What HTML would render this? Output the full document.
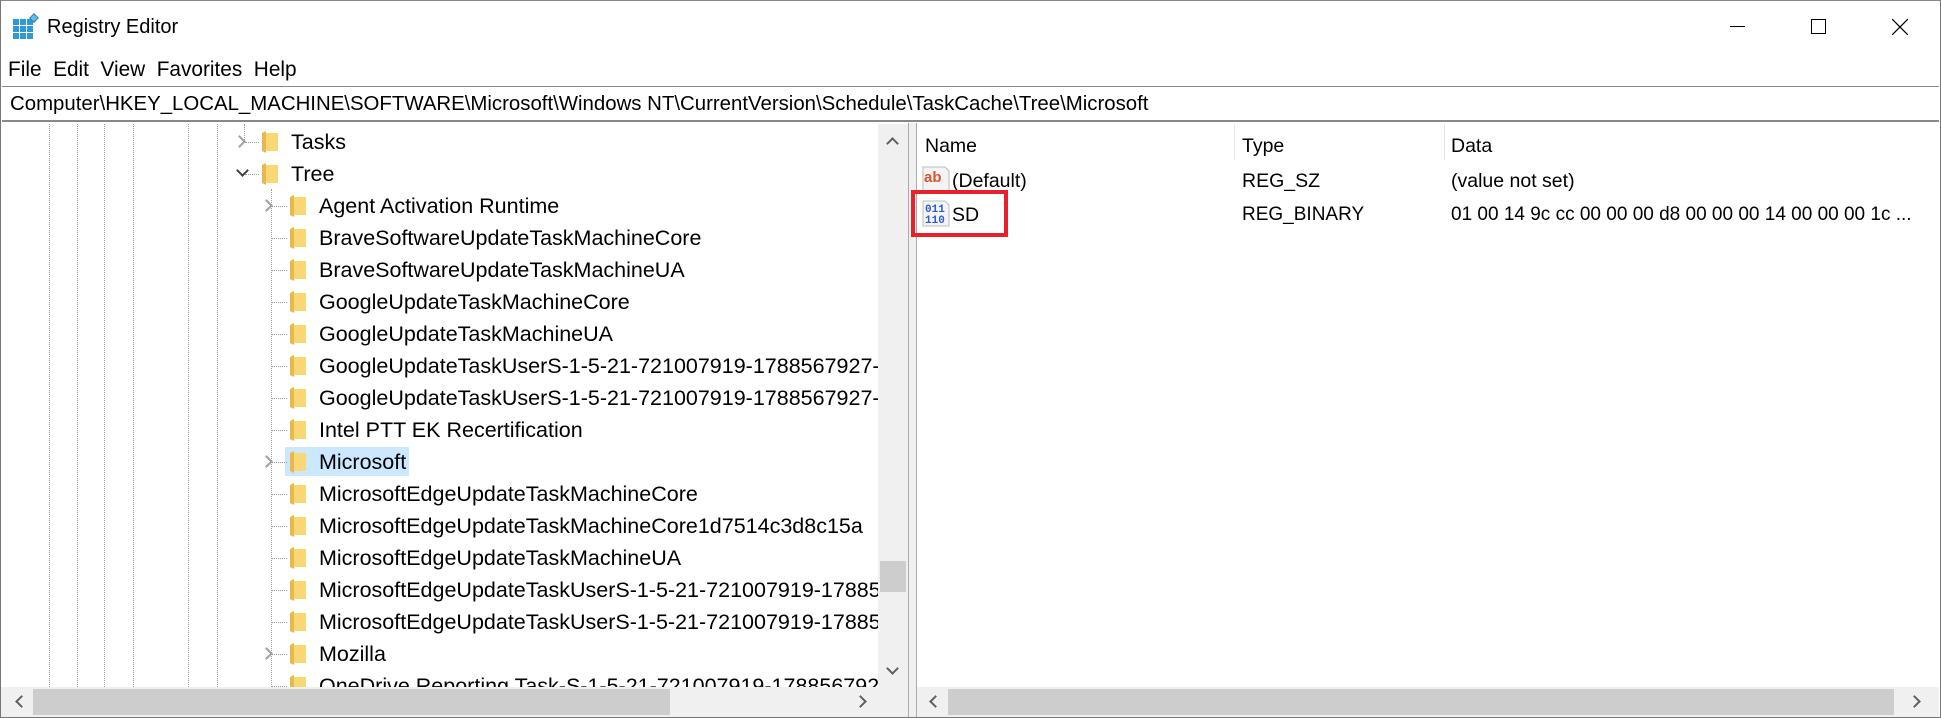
<!DOCTYPE html>
<html><head><meta charset="utf-8"><style>
*{margin:0;padding:0;box-sizing:border-box}
body{width:1941px;height:718px;background:#fff;font-family:"Liberation Sans",sans-serif;color:#000;position:relative;overflow:hidden;font-size:19px}
.a{position:absolute}
.frame{left:0;top:0;width:1941px;height:718px;border:1px solid #777;border-top-color:#888}
.dot{position:absolute;width:0;border-left:1px dotted #999}
.hd{position:absolute;height:0;border-top:1px dotted #999}
.fold{position:absolute;width:16px;height:22px}
.t{position:absolute;white-space:nowrap;line-height:32px;height:32px}
.chev{position:absolute;width:9px;height:9px;border-right:2px solid #a0a0a0;border-bottom:2px solid #a0a0a0}
</style></head><body>
<div class="a frame"></div>
<svg class="a" style="left:13px;top:13px" width="28" height="28" viewBox="0 0 28 28">
<g fill="#2b9ad6"><rect x="0" y="6" width="6" height="6"/><rect x="7" y="6" width="6" height="6"/><rect x="14" y="6" width="6" height="6"/><rect x="0" y="13" width="6" height="6"/><rect x="7" y="13" width="6" height="6"/><rect x="14" y="13" width="6" height="6"/><rect x="0" y="20" width="6" height="6"/><rect x="7" y="20" width="6" height="6"/><rect x="14" y="20" width="6" height="6"/></g>
<rect x="18" y="2" width="6" height="6" fill="#6bbbe8" stroke="#2b7fc0" transform="rotate(45 21 5)"/></svg>
<div class="a" style="left:47px;top:16px;font-size:20px">Registry Editor</div>
<div class="a" style="left:1730px;top:26px;width:15px;border-top:1px solid #000"></div>
<div class="a" style="left:1811px;top:19px;width:15px;height:15px;border:1px solid #000"></div>
<svg class="a" style="left:1892px;top:19px" width="16" height="16"><path d="M0 0L16 16M16 0L0 16" stroke="#000" stroke-width="1.2"/></svg>
<div class="a" style="left:8px;top:58px;font-size:20.8px">File&nbsp;&nbsp;Edit&nbsp;&nbsp;View&nbsp;&nbsp;Favorites&nbsp;&nbsp;Help</div>
<div class="a" style="left:2px;top:86px;width:1937px;height:36px;border-top:1px solid #888;border-bottom:2px solid #888"></div>
<div class="a" style="left:10px;top:93px;font-size:20.4px">Computer\HKEY_LOCAL_MACHINE\SOFTWARE\Microsoft\Windows NT\CurrentVersion\Schedule\TaskCache\Tree\Microsoft</div>
<div class="dot" style="left:49px;top:124px;height:563px"></div>
<div class="dot" style="left:77px;top:124px;height:563px"></div>
<div class="dot" style="left:104px;top:124px;height:563px"></div>
<div class="dot" style="left:133px;top:124px;height:563px"></div>
<div class="dot" style="left:188px;top:124px;height:563px"></div>
<div class="dot" style="left:217px;top:124px;height:563px"></div>
<div class="dot" style="left:244px;top:124px;height:16px"></div>
<div class="dot" style="left:271px;top:189px;height:498px"></div>
<div class="a" style="left:285px;top:447px;width:124px;height:29px;background:#cce8ff"></div>
<div id="tree"></div>
<div class="a" style="left:878px;top:124px;width:30px;height:563px;background:#f0f0f0"></div>
<div class="chev" style="left:888px;top:139px;transform:rotate(-135deg);border-color:#606060"></div>
<div class="a" style="left:880px;top:561px;width:26px;height:31px;background:#cdcdcd"></div>
<div class="chev" style="left:888px;top:664px;transform:rotate(45deg);border-color:#606060"></div>
<div class="a" style="left:1px;top:687px;width:909px;height:30px;background:#f0f0f0"></div>
<div class="a" style="left:33px;top:689px;width:637px;height:26px;background:#cdcdcd"></div>
<div class="chev" style="left:17px;top:697px;transform:rotate(135deg);border-color:#606060"></div>
<div class="chev" style="left:856px;top:697px;transform:rotate(-45deg);border-color:#606060"></div>
<div class="a" style="left:908px;top:123px;width:9px;height:594px;background:#f0f0f0;border-left:1px solid #aaa;border-right:1px solid #aaa"></div>
<div class="a" style="left:925px;top:133px;line-height:26px;font-size:19.5px">Name</div>
<div class="a" style="left:1242px;top:133px;line-height:26px;font-size:19.5px">Type</div>
<div class="a" style="left:1451px;top:133px;line-height:26px;font-size:19.5px">Data</div>
<div class="a" style="left:1234px;top:124px;height:36px;border-left:1px solid #e5e5e5"></div>
<div class="a" style="left:1444px;top:124px;height:36px;border-left:1px solid #e5e5e5"></div>
<svg class="a" style="left:921px;top:166px" width="30" height="28" viewBox="0 0 30 28"><path d="M2 1h22l4 4v21H2z" fill="#f4f4f4" stroke="#bbb"/><text x="3" y="16" font-family="Liberation Sans" font-weight="bold" font-size="15" fill="#d9532c">ab</text></svg>
<div class="a" style="left:952px;top:168px;line-height:26px;font-size:19.5px">(Default)</div>
<div class="a" style="left:1242px;top:168px;line-height:26px;font-size:19.5px">REG_SZ</div>
<div class="a" style="left:1451px;top:168px;line-height:26px;font-size:19.5px">(value not set)</div>
<svg class="a" style="left:921px;top:200px" width="30" height="28" viewBox="0 0 30 28"><path d="M2 1h22l4 4v21H2z" fill="#f4f4f4" stroke="#bbb"/><text x="4" y="12" font-family="Liberation Mono" font-weight="bold" font-size="11" fill="#2c5ad8">011</text><text x="4" y="23" font-family="Liberation Mono" font-weight="bold" font-size="11" fill="#2c5ad8">110</text></svg>
<div class="a" style="left:952px;top:202px;line-height:26px;font-size:19.5px">SD</div>
<div class="a" style="left:1242px;top:202px;line-height:26px;font-size:19px">REG_BINARY</div>
<div class="a" style="left:1451px;top:202px;line-height:26px;font-size:19px">01 00 14 9c cc 00 00 00 d8 00 00 00 14 00 00 00 1c ...</div>
<div class="a" style="left:911px;top:190px;width:97px;height:47px;border:4px solid #e8202a"></div>
<div class="a" style="left:917px;top:687px;width:1022px;height:30px;background:#f0f0f0"></div>
<div class="a" style="left:948px;top:689px;width:946px;height:26px;background:#cdcdcd"></div>
<div class="chev" style="left:931px;top:697px;transform:rotate(135deg);border-color:#606060"></div>
<div class="chev" style="left:1910px;top:697px;transform:rotate(-45deg);border-color:#606060"></div>
<script>
var items=[["Tasks",0,"r"],["Tree",0,"d"],["Agent Activation Runtime",1,"r"],["BraveSoftwareUpdateTaskMachineCore",1,""],["BraveSoftwareUpdateTaskMachineUA",1,""],["GoogleUpdateTaskMachineCore",1,""],["GoogleUpdateTaskMachineUA",1,""],["GoogleUpdateTaskUserS-1-5-21-721007919-1788567927-259",1,""],["GoogleUpdateTaskUserS-1-5-21-721007919-1788567927-259",1,""],["Intel PTT EK Recertification",1,""],["Microsoft",1,"r"],["MicrosoftEdgeUpdateTaskMachineCore",1,""],["MicrosoftEdgeUpdateTaskMachineCore1d7514c3d8c15a",1,""],["MicrosoftEdgeUpdateTaskMachineUA",1,""],["MicrosoftEdgeUpdateTaskUserS-1-5-21-721007919-17885679",1,""],["MicrosoftEdgeUpdateTaskUserS-1-5-21-721007919-17885679",1,""],["Mozilla",1,"r"],["OneDrive Reporting Task-S-1-5-21-721007919-1788567927-2",1,""]];
var h="";
items.forEach(function(it,i){var cy=142+i*32,lv=it[1],cx=lv?271:244,fx=lv?290:262,tx=lv?319:291;
h+='<div class="hd" style="left:'+(cx+1)+'px;top:'+cy+'px;width:'+(fx-cx-4)+'px"></div>';
if(it[2]=="r")h+='<div class="chev" style="left:'+(cx-9)+'px;top:'+(cy-5)+'px;transform:rotate(-45deg)"></div>';
if(it[2]=="d")h+='<div class="chev" style="left:'+(cx-6)+'px;top:'+(cy-8)+'px;transform:rotate(45deg);border-color:#404040"></div>';
h+='<svg class="fold" style="left:'+fx+'px;top:'+(cy-11)+'px" viewBox="0 0 16 22"><path d="M0 2l4-2v22l-4-2z" fill="#e8b84a"/><rect x="4" y="2" width="12" height="18" fill="#f8d775"/></svg>';
h+='<div class="t" style="left:'+tx+'px;top:'+(cy-16)+'px;font-size:21.5px">'+it[0]+'</div>';});
var d=document.getElementById('tree');d.outerHTML='<div class="a" style="left:0;top:124px;width:878px;height:563px;overflow:hidden"><div style="position:absolute;left:0;top:-124px;width:878px;height:687px">'+h+'</div></div>';
</script>
</body></html>
